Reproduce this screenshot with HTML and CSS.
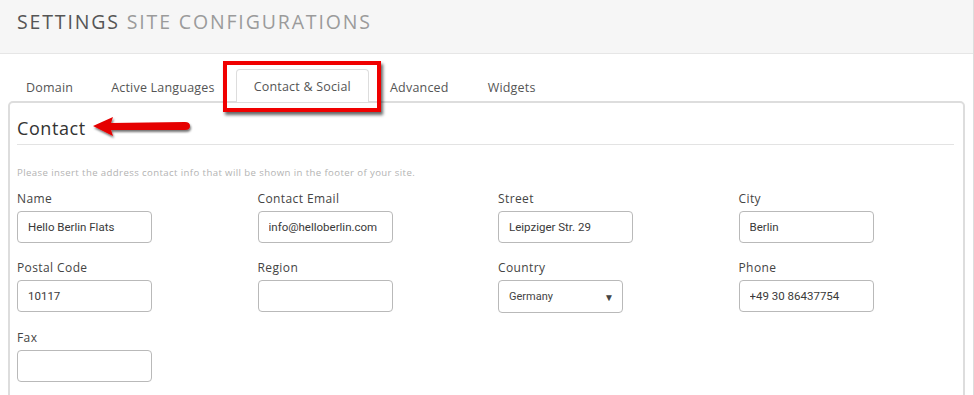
FILE: index.html
```html
<!DOCTYPE html>
<html lang="en">
<head>
  <meta charset="UTF-8" />
  <title>Settings - Site Configurations</title>
  <link rel="stylesheet" href="styles.css">
</head>
<body>
  <div class="page">
    <div class="header">
      <h1><span class="strong">SETTINGS</span> SITE CONFIGURATIONS</h1>
    </div>

    <div class="content">
      <ul class="tabs">
        <li>Domain</li>
        <li>Active Languages</li>
        <li class="active">Contact &amp; Social<span class="highlight"></span></li>
        <li>Advanced</li>
        <li>Widgets</li>
      </ul>

      <div class="panel">
        <div class="panel-title">
          <h2>Contact</h2>
          <svg class="arrow" width="104" height="28" viewBox="0 0 104 28">
            <defs>
              <filter id="sh" x="-10%" y="-30%" width="130%" height="180%">
                <feDropShadow dx="1" dy="2" stdDeviation="1.2" flood-color="#000" flood-opacity="0.55"/>
              </filter>
            </defs>
            <path d="M2 12 L22 3 L20 9 L94 8 Q99 8 99 12 Q99 16 94 16 L20 16 L22 22 Z" fill="#e50000" filter="url(#sh)"/>
          </svg>
        </div>
        <p class="hint">Please insert the address contact info that will be shown in the footer of your site.</p>

        <div class="form-grid">
          <div class="field">
            <label>Name</label>
            <input type="text" value="Hello Berlin Flats">
          </div>
          <div class="field">
            <label>Contact Email</label>
            <input type="text" value="info@helloberlin.com">
          </div>
          <div class="field">
            <label>Street</label>
            <input type="text" value="Leipziger Str. 29">
          </div>
          <div class="field">
            <label>City</label>
            <input type="text" value="Berlin">
          </div>

          <div class="field">
            <label>Postal Code</label>
            <input type="text" value="10117">
          </div>
          <div class="field">
            <label>Region</label>
            <input type="text" value="">
          </div>
          <div class="field">
            <label>Country</label>
            <div class="select-wrap">
              <select>
                <option>Germany</option>
                <option>Austria</option>
                <option>Switzerland</option>
              </select>
            </div>
          </div>
          <div class="field">
            <label>Phone</label>
            <input type="text" value="+49 30 86437754">
          </div>

          <div class="field">
            <label>Fax</label>
            <input type="text" value="">
          </div>
        </div>
      </div>
    </div>
  </div>
</body>
</html>
```

FILE: styles.css
```css
html, body {
  margin: 0;
  padding: 0;
  background: #fff;
  overflow: hidden;
}
body {
  font-family: "Open Sans", sans-serif;
  color: #444;
}
.page {
  width: 973px;
  border-right: 1px solid #ddd;
  min-height: 395px;
}
.header {
  height: 53px;
  background: #f6f6f6;
  border-bottom: 1px solid #e6e6e6;
  padding-left: 17px;
  display: flex;
  align-items: center;
}
.header h1 {
  margin: 0;
  font-size: 19.5px;
  font-weight: 400;
  color: #9b9b9b;
  letter-spacing: 1.85px;
  position: relative;
  top: -5px;
}
.header .strong {
  color: #555;
}
.content {
  padding: 16px 8px 0 8px;
}
.tabs {
  list-style: none;
  margin: 0;
  padding: 0 0 0 18px;
  display: flex;
  height: 32px;
  position: relative;
  z-index: 2;
}
.tabs li {
  font-size: 12.5px;
  letter-spacing: 0.2px;
  color: #555;
  padding: 9px 0 0 0;
  margin-right: 40px;
  position: relative;
}
.tabs li:nth-child(1) { margin-right: 38px; }
.tabs li:nth-child(2) { margin-right: 21px; }
.tabs li:nth-child(4) { margin-right: 39px; }
.tabs li.active {
  background: #fff;
  border: 1px solid #ddd;
  border-bottom: none;
  border-radius: 4px 4px 0 0;
  padding: 8px 17px 0 17px;
  height: 24px;
  margin-right: 21px;
  margin-top: -1px;
}
.highlight {
  position: absolute;
  left: -14px;
  top: -9px;
  width: 150px;
  height: 43px;
  border: 4px solid #f00000;
  box-shadow: 2px 3px 3px rgba(0,0,0,0.6);
}
.panel {
  border: 2px solid #ddd;
  border-radius: 5px;
  height: 320px;
  padding: 0 9px 0 7px;
  box-sizing: border-box;
  width: 957px;
  margin-top: -1px;
}
.panel-title {
  display: flex;
  align-items: center;
  border-bottom: 1px solid #e3e3e3;
  height: 41px;
}
.panel-title h2 {
  margin: 0;
  font-size: 18px;
  letter-spacing: 0.6px;
  font-weight: 400;
  color: #333;
  position: relative;
  top: 4px;
}
.arrow {
  margin-left: 5px;
  position: relative;
  top: 4px;
}
.hint {
  margin: 22px 0 0 0;
  font-size: 9.6px;
  letter-spacing: 0.4px;
  color: #b3b3b3;
  line-height: 12px;
}
.form-grid {
  display: grid;
  grid-template-columns: repeat(4, 240.5px);
  row-gap: 17px;
  margin-top: 12px;
}
.field label {
  display: block;
  font-size: 12px;
  letter-spacing: 0.4px;
  color: #444;
  line-height: 16px;
  margin-bottom: 4px;
}
.field input,
.field select {
  box-sizing: border-box;
  width: 135px;
  height: 32px;
  border: 1px solid #b9b9b9;
  border-radius: 4px;
  padding: 0 10px;
  font-family: Roboto, sans-serif;
  font-size: 11.5px;
  color: #3a3a3a;
  background: #fff;
  outline: none;
}
.select-wrap {
  position: relative;
  width: 125px;
}
.field select {
  width: 125px;
  height: 33px;
  -webkit-appearance: none;
  appearance: none;
  font-size: 11px;
  color: #444;
}
.select-wrap::after {
  content: "\25BC";
  position: absolute;
  right: 9px;
  top: 10px;
  font-size: 10px;
  color: #444;
  pointer-events: none;
}
```
